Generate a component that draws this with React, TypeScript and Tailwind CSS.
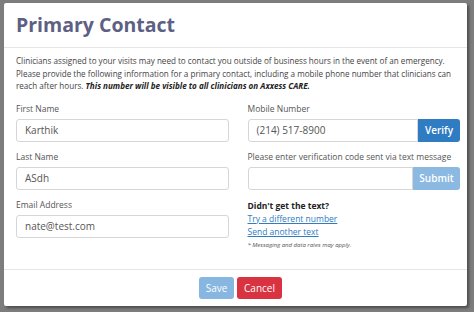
import React from "react";

const Field = ({ label, value }: { label: string; value: string }) => (
  <div className="flex flex-col">
    <label className="text-[8.5px] leading-[12px] text-[#555] mb-[4px]">{label}</label>
    <div className="h-[23px] rounded-[3px] border border-[#d6d6d6] bg-white px-[8px] flex items-center text-[10px] text-[#555]">
      {value}
    </div>
  </div>
);

const App = () => {
  return (
    <div className="w-[474px] h-[312px] bg-[#7d7d7d] pt-[3px] pl-[4px]" style={{ fontFamily: '"Open Sans", sans-serif' }}>
      <div className="w-[463px] h-[303px] bg-white rounded-[2px] shadow-[2px_2px_3px_rgba(0,0,0,0.4)] flex flex-col">
        <div className="h-[45px] border-b border-[#e6e6e6] flex items-center pl-[12px]">
          <h1 className="text-[19.5px] font-bold text-[#5c6084] leading-none">Primary Contact</h1>
        </div>
        <div className="flex-1 pl-[12px] pr-[7px] pt-[7px] border-b border-[#e6e6e6]">
          <p className="text-[8.1px] leading-[12.5px] text-[#444] pr-[4px]">
            Clinicians assigned to your visits may need to contact you outside of business hours in the event of an emergency. Please provide the following information for a primary contact, including a mobile phone number that clinicians can reach after hours.{" "}
            <b className="italic text-[#222]">This number will be visible to all clinicians on Axxess CARE.</b>
          </p>
          <div className="grid grid-cols-2 gap-x-[19px] mt-[10px]">
            <div className="flex flex-col gap-[9px]">
              <Field label="First Name" value="Karthik" />
              <Field label="Last Name" value="ASdh" />
              <Field label="Email Address" value="nate@test.com" />
            </div>
            <div className="flex flex-col">
              <label className="text-[8.5px] leading-[12px] text-[#555] mb-[4px]">Mobile Number</label>
              <div className="flex h-[23px]">
                <div className="flex-1 rounded-l-[3px] border border-[#d6d6d6] px-[8px] flex items-center text-[10px] text-[#555]">
                  (214) 517-8900
                </div>
                <button className="w-[42px] rounded-r-[3px] bg-[#2f7cc3] text-white text-[10px] font-semibold">Verify</button>
              </div>
              <label className="text-[8.5px] leading-[12px] text-[#555] mt-[9px] mb-[4px]">
                Please enter verification code sent via text message
              </label>
              <div className="flex h-[23px]">
                <div className="flex-1 rounded-l-[3px] border border-[#d6d6d6]" />
                <button className="w-[47px] rounded-r-[3px] bg-[#8bb9e2] text-white text-[10px] font-semibold">Submit</button>
              </div>
              <div className="mt-[9px] text-[8.5px] font-bold text-[#222] leading-[13px]">Didn&apos;t get the text?</div>
              <a className="text-[8.5px] leading-[13px] text-[#2f7cc3] underline">Try a different number</a>
              <a className="text-[8.5px] leading-[13px] text-[#2f7cc3] underline">Send another text</a>
              <div className="text-[6px] italic text-[#555] leading-[13px] mt-[1px]">* Messaging and data rates may apply.</div>
            </div>
          </div>
        </div>
        <div className="h-[36px] flex items-center justify-center gap-[3px] pl-[10px]">
          <button className="w-[35px] h-[22px] rounded-[3px] bg-[#87b6e0] text-white text-[10px]">Save</button>
          <button className="w-[45px] h-[22px] rounded-[3px] bg-[#d93240] text-white text-[10px]">Cancel</button>
        </div>
      </div>
    </div>
  );
};

export default App;
